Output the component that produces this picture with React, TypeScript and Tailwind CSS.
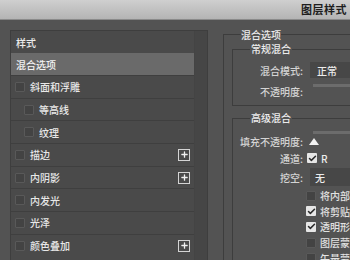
import { Plus, ChevronDown, Check } from "lucide-react";

type Row = { label: string; indent?: boolean; plus?: boolean };

const rows: Row[] = [
  { label: "斜面和浮雕" },
  { label: "等高线", indent: true },
  { label: "纹理", indent: true },
  { label: "描边", plus: true },
  { label: "内阴影", plus: true },
  { label: "内发光" },
  { label: "光泽" },
  { label: "颜色叠加", plus: true },
];

const options = [
  { label: "将内部效果混合成组", checked: false },
  { label: "将剪贴图层混合成组", checked: true },
  { label: "透明形状图层", checked: true },
  { label: "图层蒙版隐藏效果", checked: false },
  { label: "矢量蒙版隐藏效果", checked: false },
];

const Box = ({ checked = false }: { checked?: boolean }) =>
  checked ? (
    <span className="flex h-[10px] w-[10px] shrink-0 items-center justify-center rounded-[1px] bg-[#e6e6e6]">
      <Check className="h-[9px] w-[9px] text-[#2a2a2a]" strokeWidth={4} />
    </span>
  ) : (
    <span className="h-[10px] w-[10px] shrink-0 rounded-[1px] border border-[#595959] bg-[#434343]" />
  );

const App = () => {
  return (
    <div className="flex h-[260px] w-[350px] flex-col overflow-hidden bg-[#535353] font-['Noto_Sans_CJK_SC',sans-serif] text-[10px] font-medium text-[#e2e2e2]">
      {/* title bar */}
      <div className="flex h-[20px] shrink-0 items-center justify-end border-b border-[#8a8a8a] bg-gradient-to-b from-[#cfcfcf] to-[#b4b4b4] pr-[3px] text-[11px] font-semibold tracking-[0.5px] text-[#1e1e1e]">
        图层样式
      </div>

      <div className="flex flex-1 pl-[10px] pt-[10px]">
        {/* left styles list */}
        <div className="flex h-[240px] w-[198px] shrink-0 border border-[#3e3e3e] bg-[#4a4a4a]">
          <div className="flex-1">
            <div className="flex h-[22px] items-center pl-[5px] text-[#ececec]">样式</div>
            <div className="flex h-[22px] items-center bg-[#6a6a6a] pl-[5px] text-[#f2f2f2]">混合选项</div>
            {rows.map((r) => (
              <div
                key={r.label}
                className={`flex h-[22.7px] items-center border-t border-[#3f3f3f] pr-[4px] ${r.indent ? "pl-[13px]" : "pl-[4px]"}`}
              >
                <Box />
                <span className="ml-[5px] flex-1 text-[#e8e8e8]">{r.label}</span>
                {r.plus && (
                  <span className="flex h-[12px] w-[12px] items-center justify-center border border-[#d4d4d4]">
                    <Plus className="h-[9px] w-[9px] text-[#f0f0f0]" strokeWidth={3.5} />
                  </span>
                )}
              </div>
            ))}
          </div>
          <div className="w-[13px] border-l border-[#444] bg-[#464646]" />
        </div>

        {/* right blending options */}
        <fieldset className="ml-[15px] mt-[-3px] w-[200px] shrink-0 border border-[#3d3d3d] pl-[8px]">
          <legend className="ml-[9px] leading-[15px] text-[#ececec]">混合选项</legend>

          <fieldset className="h-[64px] border border-[#3d3d3d]">
            <legend className="ml-[17px] px-[1px] leading-[14px] text-[#ececec]">常规混合</legend>
            <div className="mt-[6px] flex h-[16px] items-center">
              <span className="w-[70px] text-right text-[#d4d4d4]">混合模式:</span>
              <span className="ml-[7px] flex h-[16px] flex-1 items-center bg-[#474747] pl-[7px] text-[#ececec]">正常</span>
            </div>
            <div className="mt-[5px] flex h-[16px]">
              <span className="w-[70px] pt-[1px] text-right text-[#d4d4d4]">不透明度:</span>
              <span className="ml-[10px] mt-[1px] h-[3px] flex-1 bg-[#6c6c6c]" />
            </div>
          </fieldset>

          <fieldset className="mt-[5px] h-[160px] border border-[#3d3d3d]">
            <legend className="ml-[17px] px-[1px] leading-[14px] text-[#ececec]">高级混合</legend>
            <div className="relative mt-[8px] flex h-[16px] items-center">
              <span className="w-[70px] text-right text-[#d4d4d4]">填充不透明度:</span>
              <span className="absolute left-[80px] top-[-2px] h-[3px] w-[100px] bg-[#6c6c6c]" />
              <svg className="ml-[6px] mt-[1px]" width="10" height="7" viewBox="0 0 10 7">
                <path d="M5 0 L10 7 L0 7 Z" fill="#f2f2f2" />
              </svg>
            </div>
            <div className="mt-[1px] flex h-[16px] items-center">
              <span className="w-[70px] text-right text-[#d4d4d4]">通道:</span>
              <span className="ml-[4px]"><Box checked /></span>
              <span className="ml-[4px] text-[#ececec]">R</span>
            </div>
            <div className="mt-[2px] flex h-[18px] items-center">
              <span className="w-[70px] text-right text-[#d4d4d4]">挖空:</span>
              <span className="ml-[7px] flex h-[18px] flex-1 items-center bg-[#474747] pl-[5px] text-[#ececec]">
                无
                <ChevronDown className="ml-[24px] h-[10px] w-[10px]" />
              </span>
            </div>
            <div className="ml-[73px] mt-[2px] flex flex-col">
              {options.map((o) => (
                <div key={o.label} className="flex h-[15.6px] items-center">
                  <Box checked={o.checked} />
                  <span className="ml-[4px] whitespace-nowrap text-[#e2e2e2]">{o.label}</span>
                </div>
              ))}
            </div>
          </fieldset>
        </fieldset>
      </div>
    </div>
  );
};

export default App;
